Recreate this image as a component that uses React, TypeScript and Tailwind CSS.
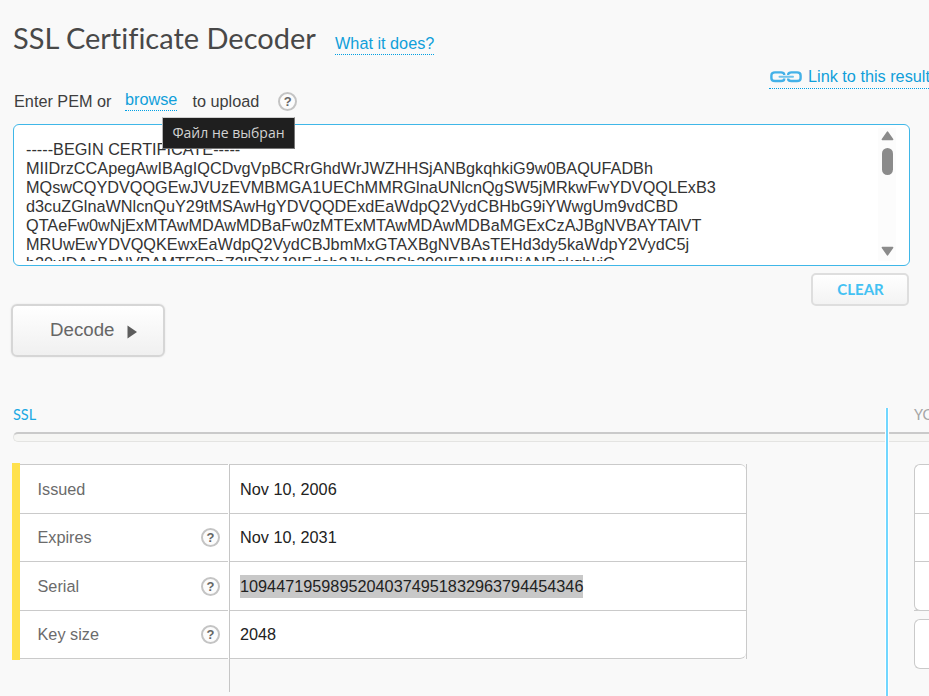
import React from "react";

const PEM_LINES = [
  "-----BEGIN CERTIFICATE-----",
  "MIIDrzCCApegAwIBAgIQCDvgVpBCRrGhdWrJWZHHSjANBgkqhkiG9w0BAQUFADBh",
  "MQswCQYDVQQGEwJVUzEVMBMGA1UEChMMRGlnaUNlcnQgSW5jMRkwFwYDVQQLExB3",
  "d3cuZGlnaWNlcnQuY29tMSAwHgYDVQQDExdEaWdpQ2VydCBHbG9iYWwgUm9vdCBD",
  "QTAeFw0wNjExMTAwMDAwMDBaFw0zMTExMTAwMDAwMDBaMGExCzAJBgNVBAYTAlVT",
  "MRUwEwYDVQQKEwxEaWdpQ2VydCBJbmMxGTAXBgNVBAsTEHd3dy5kaWdpY2VydC5j",
  "b20xIDAeBgNVBAMTF0RpZ2lDZXJ0IEdsb2JhbCBSb290IENBMIIBIjANBgkqhkiG",
];

const ROWS = [
  { label: "Issued", value: "Nov 10, 2006", help: false, selected: false, height: "h-[49px]" },
  { label: "Expires", value: "Nov 10, 2031", help: true, selected: false, height: "h-[48px]" },
  { label: "Serial", value: "10944719598952040374951832963794454346", help: true, selected: true, height: "h-[49px]" },
  { label: "Key size", value: "2048", help: true, selected: false, height: "h-[48px]" },
];

function Help() {
  return (
    <span className="flex h-[19px] w-[19px] shrink-0 items-center justify-center rounded-full border-2 border-[#c4c4c4] bg-[#fcfcfc] font-['Liberation_Sans',sans-serif] text-[13px] leading-none font-bold text-[#666]">
      ?
    </span>
  );
}

function ChainIcon() {
  return (
    <svg width="33" height="12" viewBox="0 0 33 12" fill="none" stroke="#43b1e8" strokeWidth="2.4">
      <path d="M14.2 4V3.6C14.2 2.2 13 1.4 11 1.4H5C2.6 1.4 1.4 2.6 1.4 4.4V7.2C1.4 9 2.6 10 5 10H11C13 10 14.2 9.2 14.2 8V7.6" />
      <path d="M18.2 4V3.6C18.2 2.2 19.4 1.4 21.4 1.4H27C29.4 1.4 30.6 2.6 30.6 4.4V7.2C30.6 9 29.4 10 27 10H21.4C19.4 10 18.2 9.2 18.2 8V7.6" />
      <path d="M9.5 5.8H23" strokeWidth="2" stroke="#6fc3ec" strokeLinecap="round" />
    </svg>
  );
}

export default function App() {
  return (
    <div className="flex h-[696px] w-[929px] flex-col overflow-hidden bg-[#f9f9f9] font-['Liberation_Sans',sans-serif] text-[16.25px] whitespace-nowrap text-[#3e3e3e]">
      <header className="flex h-[64px] shrink-0 items-start pl-[13px]">
        <h1 className="mt-[18px] w-[322px] font-['Lato','Open_Sans',sans-serif] text-[29px] leading-[40px] text-[#484848] [font-variant-ligatures:none]">
          SSL Certificate Decoder
        </h1>
        <a className="mt-[34px] h-[21px] border-b border-dotted border-[#009fe3] leading-[19px] text-[#109fda]">What it does?</a>
      </header>

      <div className="flex h-[25px] shrink-0 pl-[769px]">
        <a className="flex h-[25px] w-[170px] shrink-0 items-start border-b border-dotted border-[#009fe3] text-[#109fda]">
          <span className="mt-[7px] ml-px"><ChainIcon /></span>
          <span className="mt-[3px] ml-[5px] leading-[19px]">Link to this result</span>
        </a>
      </div>

      <div className="relative flex h-[35px] shrink-0 items-start pl-[14px]">
        <span className="mt-[3px] w-[111px] leading-[19px]">Enter PEM or</span>
        <a className="mt-px h-[21px] border-b border-dotted border-[#009fe3] leading-[19px] text-[#109fda]">browse</a>
        <span className="mt-[3px] ml-[15px] leading-[19px]">to upload</span>
        <span className="mt-[3px] ml-[19px]"><Help /></span>
        <div className="absolute top-[28px] left-[162px] z-10 flex h-[32px] w-[133px] items-center justify-center border border-[#767676] border-t-[#cfcfcf] border-l-[#b5b5b5] bg-[#1f1f1f] pb-[2px] font-['Open_Sans','Noto_Sans',sans-serif] text-[14px] text-[#d2d2d2]">
          Файл не выбран
        </div>
      </div>

      <section className="ml-[13px] flex h-[142px] w-[897px] shrink-0 rounded-[6px] border border-[#3fb7e8] bg-white pt-[3px] pr-[13px] pb-[4px] pl-[12px]">
        <div className="flex-1 overflow-hidden pt-[12px] text-[#333]">
          {PEM_LINES.map((line) => (
            <div key={line} className="h-[19px] leading-[19px]">{line}</div>
          ))}
        </div>
        <div className="flex w-[18px] flex-col items-center bg-[#fcfcfc] pt-[3px] pb-[4px]">
          <svg width="13" height="10" viewBox="0 0 13 10"><path d="M6.5 1.2L11.6 8.4H1.4Z" fill="#8b8b8b" stroke="#8b8b8b" strokeWidth="1.6" strokeLinejoin="round" /></svg>
          <span className="mt-[7px] h-[27px] w-[11px] rounded-full bg-[#8b8b8b]" />
          <span className="flex-1" />
          <svg className="mb-px" width="13" height="10" viewBox="0 0 13 10"><path d="M6.5 8.8L11.6 1.6H1.4Z" fill="#8b8b8b" stroke="#8b8b8b" strokeWidth="1.6" strokeLinejoin="round" /></svg>
        </div>
      </section>

      <div className="flex h-[142px] shrink-0 items-start justify-between pr-[20px] pl-[11px]">
        <button className="mt-[38px] flex h-[53px] w-[154px] items-center rounded-[6px] border-2 border-[#d6d6d6] bg-linear-to-b from-white to-[#f0f0f0] pb-px pl-[37px] text-[18.7px] text-[#666] shadow-[0_0_2px_rgba(0,0,0,0.1)]">
          <span>Decode</span>
          <svg className="mt-[3px] ml-[13px]" width="11" height="14" viewBox="0 0 11 14"><path d="M0.5 0.5L10 7L0.5 13.5Z" fill="#5c5c5c" /></svg>
        </button>
        <button className="mt-[7px] flex h-[33px] w-[98px] items-center justify-center rounded-[5px] border-2 border-[#dedede] bg-linear-to-b from-white to-[#f3f3f3] pb-px pl-px font-['Lato','Open_Sans',sans-serif] text-[15px] font-bold text-[#43c1f3]">
          CLEAR
        </button>
      </div>

      <main className="flex h-[288px] shrink-0">
        <div className="flex w-[885px] shrink-0 flex-col pl-[12px]">
          <h2 className="ml-px h-[24px] font-['Lato','Open_Sans',sans-serif] text-[14.5px] leading-[14px] text-[#1aa9e3]">SSL</h2>
          <div className="ml-px h-[10px] shrink-0 rounded-l-[5px] border border-t-2 border-r-0 border-[#e4e4e2] border-t-[#cacaca] bg-[#f6f6f4]" />
          <div className="mt-[21px] flex">
            <div className="h-[197px] w-[8px] bg-[#ffe14d]" />
            <div className="mt-px flex h-[228px]">
              <div className="h-[195px] w-[208px] border-t border-[#cacaca]">
                {ROWS.map((row) => (
                  <div key={row.label} className={`flex items-center justify-between border-b border-[#cacaca] bg-white pr-[8px] pl-[17.5px] text-[#6b6b6b] ${row.height}`}>
                    <span>{row.label}</span>
                    {row.help && <span><Help /></span>}
                  </div>
                ))}
              </div>
              <div className="h-[195px] w-px bg-white" />
              <div className="w-px bg-[#c6c6c6]" />
              <div className="h-[195px] w-[517px] border-r border-[#cacaca]">
                <div className="h-[195px] rounded-r-[6px] border-t border-[#cacaca] bg-white">
                  {ROWS.map((row) => (
                    <div key={row.label} className={`flex items-center border-b border-[#cacaca] pl-[10px] text-[#222] last:rounded-br-[6px] ${row.height}`}>
                      <span className={row.selected ? "mt-px h-[23px] bg-[#c8c8c8] leading-[23px]" : ""}>{row.value}</span>
                    </div>
                  ))}
                </div>
              </div>
            </div>
          </div>
        </div>
        <div className="w-[4px] shrink-0 border-r border-l border-white bg-[#72d7ff]" />
        <div className="flex w-[40px] shrink-0 flex-col">
          <h2 className="ml-[25px] h-[24px] font-['Lato','Open_Sans',sans-serif] text-[14.5px] leading-[14px] text-[#a5a5a5]">YOUR</h2>
          <div className="h-[10px] shrink-0 border-t-2 border-b border-t-[#cacaca] border-b-[#e4e4e2] bg-[#f6f6f4]" />
          <div className="mt-[22px] ml-[25px] h-[147px] shrink-0 border-b border-[#cacaca]">
            <div className="h-[147px] rounded-l-[6px] border border-r-0 border-[#cacaca] bg-white">
              <div className="h-[49px] border-b border-[#cacaca]" />
              <div className="h-[48px] border-b border-[#cacaca]" />
            </div>
          </div>
          <div className="mt-[8px] ml-[25px] h-[50px] shrink-0 rounded-l-[6px] border border-r-0 border-[#cacaca] bg-white" />
        </div>
      </main>
    </div>
  );
}
